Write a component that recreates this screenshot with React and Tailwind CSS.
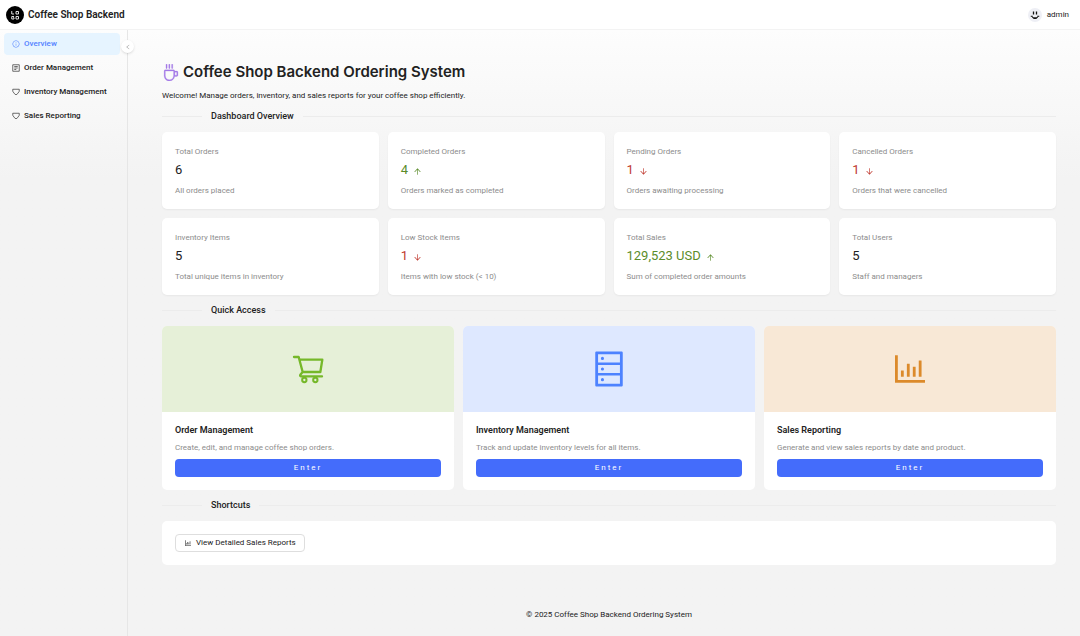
import clsx from 'clsx';
import {
  AiOutlineArrowDown, AiOutlineArrowUp, AiOutlineBarChart, AiOutlineCoffee, AiOutlineDatabase,
  AiOutlineInfoCircle, AiOutlineLeft,
} from 'react-icons/ai';

const menu = [
  { label: 'Overview', icon: AiOutlineInfoCircle, active: true },
  { label: 'Order Management', icon: FormIcon },
  { label: 'Inventory Management', icon: ShieldIcon },
  { label: 'Sales Reporting', icon: ShieldIcon },
];

const stats = [
  { title: 'Total Orders', value: '6', note: 'All orders placed' },
  { title: 'Completed Orders', value: '4', note: 'Orders marked as completed', trend: 'up' },
  { title: 'Pending Orders', value: '1', note: 'Orders awaiting processing', trend: 'down' },
  { title: 'Cancelled Orders', value: '1', note: 'Orders that were cancelled', trend: 'down' },
  { title: 'Inventory Items', value: '5', note: 'Total unique items in inventory' },
  { title: 'Low Stock Items', value: '1', note: 'Items with low stock (< 10)', trend: 'down' },
  { title: 'Total Sales', value: '129,523 USD', note: 'Sum of completed order amounts', trend: 'up' },
  { title: 'Total Users', value: '5', note: 'Staff and managers' },
];

const links = [
  { title: 'Order Management', note: 'Create, edit, and manage coffee shop orders.', icon: CartIcon, cover: 'bg-[#e6f0d8] text-[#76b82a]' },
  { title: 'Inventory Management', note: 'Track and update inventory levels for all items.', icon: AiOutlineDatabase, cover: 'bg-[#dee8ff] text-[#4d82ff]' },
  { title: 'Sales Reporting', note: 'Generate and view sales reports by date and product.', icon: AiOutlineBarChart, cover: 'bg-[#f8e8d6] text-[#dc8a2b]' },
];

const trendColors = { up: 'text-[#5b8c2a]', down: 'text-[#c0392f]' };

function CartIcon({ className }) {
  return (
    <svg className={className} viewBox="0 0 120 120" fill="none" stroke="currentColor" strokeWidth="7" strokeLinecap="round" strokeLinejoin="round">
      <path d="M18 24h14l12 45-7 8q-2 5 3 5h62M35 32h68l-6 37H44" />
      <circle cx="49" cy="93" r="6.500" strokeWidth="6" />
      <circle cx="82" cy="93" r="6.500" strokeWidth="6" />
    </svg>
  );
}

function FormIcon({ className }) {
  return (
    <svg className={className} viewBox="0 0 16 16" fill="none" stroke="currentColor" strokeWidth="1.300">
      <path d="M1.500 1.500h13v13h-13zM4.500 5h7M4.500 8h7M4.500 11h4" />
    </svg>
  );
}

function ShieldIcon({ className }) {
  return (
    <svg className={className} viewBox="0 0 16 16" fill="none" stroke="currentColor" strokeWidth="1.300" strokeLinejoin="round">
      <path d="M1.500 2.500h13v4L11.500 11 8 13.800 4.500 11 1.500 6.500z" />
    </svg>
  );
}

function Logo() {
  return (
    <svg className="size-[18px]" viewBox="0 0 36 36" aria-hidden="true">
      <circle cx="18" cy="18" r="18" fill="#000" />
      <g fill="none" stroke="#ddd" strokeWidth="2">
        <path d="M11.500 10v6h4.500M20 11h5v5h-5zM16 21h-4.500v5H16v-2.500h-2M20 21h5v5h-5z" />
      </g>
    </svg>
  );
}

function Avatar() {
  return (
    <svg className="size-[14px]" viewBox="0 0 28 28" aria-hidden="true">
      <circle cx="14" cy="14" r="14" fill="#eeeff5" />
      <g fill="none" stroke="#111" strokeWidth="2.600">
        <path d="M11 7v6M17 7v6" />
        <path d="M5.500 16.500h4M18.500 16.500h4M8 17c1.500 5.500 10.500 5.500 12 0M9.500 19.500h9" strokeWidth="2" />
      </g>
    </svg>
  );
}

function Divider({ children }) {
  return (
    <div className="my-2 flex items-center gap-[9px]">
      <div className="h-px w-10 bg-[#ececec]" />
      <h2 className="text-[9px] leading-[15px] font-medium">{children}</h2>
      <div className="h-px flex-1 bg-[#ececec]" />
    </div>
  );
}

function StatCard({ title, value, note, trend }) {
  const Arrow = trend === 'up' ? AiOutlineArrowUp : AiOutlineArrowDown;
  return (
    <div className="rounded-[5px] bg-white px-[13px] pt-[14px] pb-3 shadow-xs">
      <div className="text-[8px] leading-3 text-[#8c8c8c]">{title}</div>
      <div className={clsx('flex items-center gap-[5px] pt-[2px] pb-[6px] text-[13px] leading-[19px]', trend && trendColors[trend])}>
        {value}
        {trend && <Arrow className="mt-[3px] size-[9px]" />}
      </div>
      <div className="text-[8px] leading-3 text-[#8c8c8c]">{note}</div>
    </div>
  );
}

function QuickCard({ title, note, icon: Icon, cover }) {
  return (
    <div className="overflow-hidden rounded-[5px] bg-white">
      <div className={clsx('flex h-[86px] items-center justify-center', cover)}>
        <Icon className="size-10" />
      </div>
      <div className="px-[13px] pt-3 pb-[13px]">
        <h3 className="text-[9px] leading-3 font-semibold">{title}</h3>
        <p className="mt-[6px] text-[8px] leading-3 text-[#8c8c8c]">{note}</p>
        <button className="mt-[5px] block h-[18px] w-full rounded-[4px] bg-[#446cfb] text-[8px] tracking-[2px] text-white">Enter</button>
      </div>
    </div>
  );
}

export default function App() {
  return (
    <div className="flex min-h-screen flex-col bg-linear-to-b from-white to-[#f3f3f3] to-28% font-['Roboto','Inter',sans-serif] text-[#222]">
      <header className="flex h-[30px] items-center justify-between border-b border-[#f3f3f3] bg-white pr-[11px] pl-[6px]">
        <a href="#" className="flex items-center gap-1">
          <Logo />
          <span className="text-[10px] font-semibold">Coffee Shop Backend</span>
        </a>
        <button className="flex items-center gap-[5px] text-[8px]">
          <Avatar />
          admin
        </button>
      </header>

      <div className="flex flex-1">
        <aside className="relative w-32 shrink-0 border-r border-[#e6e6e6]">
          <nav className="flex flex-col gap-[2px] py-[3px] pr-[7px] pl-1">
            {menu.map(({ label, icon: Icon, active }) => (
              <a
                key={label}
                href="#"
                className={clsx(
                  'flex h-[22px] items-center gap-1 rounded-[4px] pl-2 text-[8px] font-medium',
                  active ? 'bg-[#e6f4ff] text-[#5282ff]' : 'text-[#222]',
                )}
              >
                <Icon className="size-2" />
                {label}
              </a>
            ))}
          </nav>
          <button aria-label="Collapse menu" className="absolute top-[10px] -right-[7px] flex size-[13px] items-center justify-center rounded-full bg-white text-[#999] shadow-sm">
            <AiOutlineLeft className="size-[6px]" />
          </button>
        </aside>

        <div className="flex flex-1 flex-col pr-6 pl-[34px]">
          <main className="flex-1 pt-[30px]">
            <h1 className="flex items-center gap-1 font-['Inter',sans-serif] text-[15px] leading-6 font-semibold">
              <AiOutlineCoffee className="size-[17px] text-[#a57be8]" stroke="currentColor" strokeWidth="15" />
              Coffee Shop Backend Ordering System
            </h1>
            <p className="mt-[6px] text-[8px] leading-[11px]">
              Welcome! Manage orders, inventory, and sales reports for your coffee shop efficiently.
            </p>

            <Divider>Dashboard Overview</Divider>
            <div className="grid grid-cols-4 gap-[9px]">
              {stats.map((s) => <StatCard key={s.title} {...s} />)}
            </div>

            <Divider>Quick Access</Divider>
            <div className="grid grid-cols-3 gap-[9px]">
              {links.map((l) => <QuickCard key={l.title} {...l} />)}
            </div>

            <Divider>Shortcuts</Divider>
            <div className="rounded-[5px] bg-white p-[13px]">
              <button className="flex h-[18px] items-center gap-1 rounded-[4px] border border-[#dedede] px-2 text-[8px]">
                <AiOutlineBarChart className="size-2" />
                View Detailed Sales Reports
              </button>
            </div>
          </main>
          <footer className="pb-[15px] text-center text-[8px] leading-3">© 2025 Coffee Shop Backend Ordering System</footer>
        </div>
      </div>
    </div>
  );
}
